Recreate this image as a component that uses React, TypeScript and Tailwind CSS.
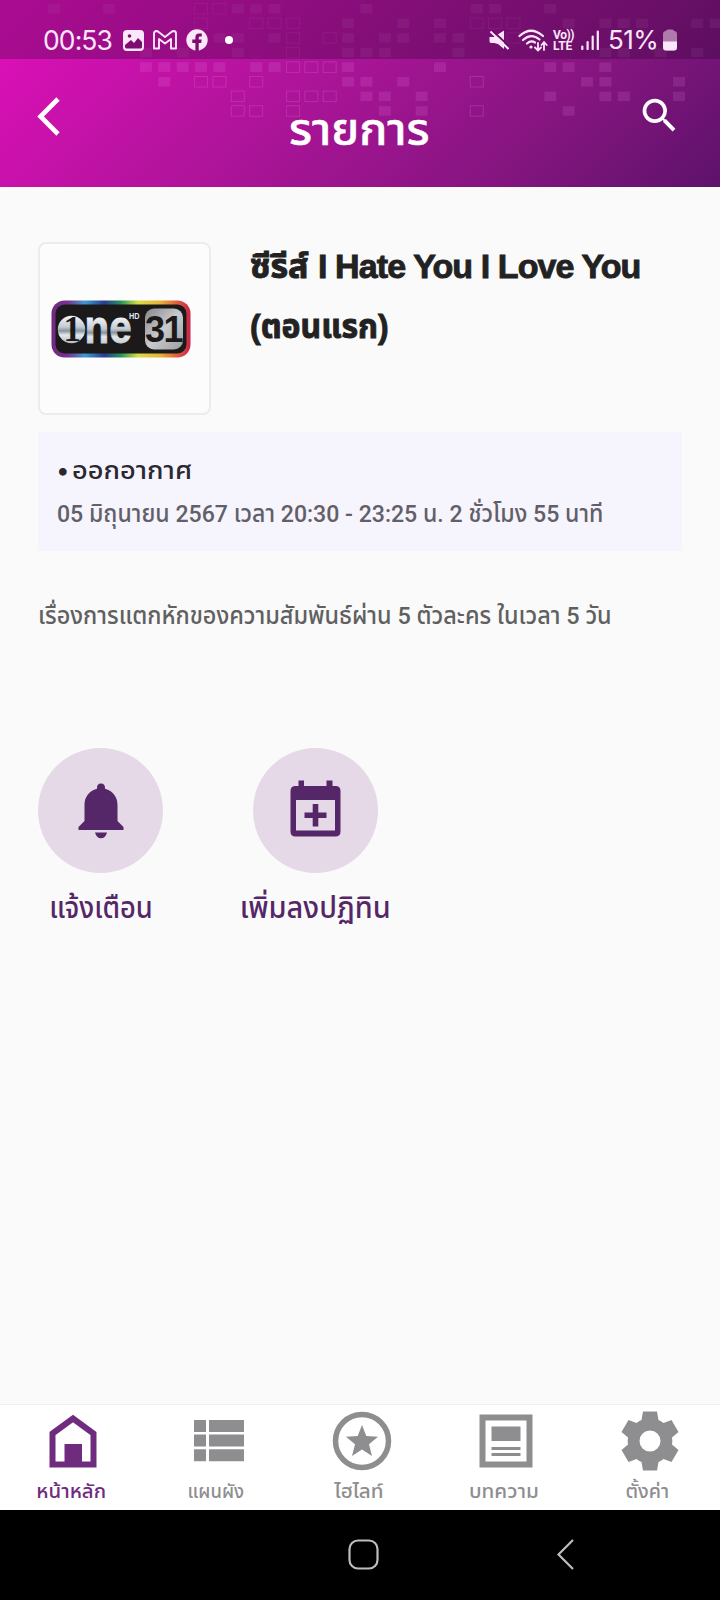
import { MdSearch } from "react-icons/md";

// Mosaic rows behind the header, by column index
const FILLED: number[][] = [
  [0, 3, 10, 11, 12, 17, 23, 24, 27],
  [16, 19, 21, 28, 30, 31, 32, 35, 36],
  [9, 10, 12, 16, 18, 19, 21, 22],
  [5, 7, 10, 16, 17, 18, 22, 30, 31, 33, 35],
  [5, 6, 7, 8, 9, 11, 12, 16, 21, 27, 28, 30],
  [6, 16, 17, 19, 29, 30, 34],
  [17, 18, 20, 27, 30, 31, 34],
  [18, 20, 28],
];

const OUTLINED: number[][] = [
  [8, 9],
  [8, 11, 12, 13, 23, 24, 25],
  [13, 15, 25],
  [13],
  [13, 14, 15],
  [8, 9, 11, 23],
  [10, 13, 14, 15],
  [10, 11, 13, 23],
];

function Mosaic() {
  return (
    <svg
      className="absolute inset-0"
      width="720"
      height="187"
      viewBox="0 0 720 187"
      aria-hidden
    >
      {FILLED.map((cols, row) =>
        cols.map((c) => (
          <rect
            key={`f${row}-${c}`}
            x={48 + c * 18.38}
            y={4 + row * 14.6}
            width="12"
            height="9.5"
            fill="#e58be0"
            opacity={row < 4 ? 0.12 : 0.16}
          />
        ))
      )}
      {OUTLINED.map((cols, row) =>
        cols.map((c) => (
          <rect
            key={`o${row}-${c}`}
            x={47.5 + c * 18.38}
            y={3.5 + row * 14.6}
            width="13"
            height="10.5"
            fill="none"
            stroke="#e58be0"
            opacity={row < 4 ? 0.15 : 0.22}
          />
        ))
      )}
    </svg>
  );
}

function StatusBar() {
  return (
    <div className="relative flex h-[59px] items-start justify-between bg-[#210026]/28 pt-[24px] pr-[43px] pl-[43px] text-[#fbe6fa]">
      <div className="flex h-8 items-center">
        <span className="w-[80px] text-[26.5px] leading-8 tracking-[-0.9px] whitespace-nowrap">
          00:53
        </span>
        {/* Gallery */}
        <svg width="21" height="21" viewBox="0 0 21 21">
          <rect width="21" height="21" rx="4" fill="currentColor" />
          <path
            d="M2 17 L2 15 L8 10 L11 13 L15 8 L19 12 V17 Q19 18.500 17 18.500 H4 Q2 18.500 2 17Z"
            fill="#7e0b70"
          />
          <circle cx="6.500" cy="6" r="1.800" fill="#7e0b70" />
        </svg>
        {/* Gmail */}
        <svg className="ml-[9px]" width="24" height="20" viewBox="0 0 24 20">
          <path
            d="M1 3.500 Q1 1 3.500 1 L5 1.500 L12 7 L19 1.500 L20.500 1 Q23 1 23 3.500 V18.500 H18 V9 L12 13.500 L6 9 V18.500 H1Z"
            fill="none"
            stroke="currentColor"
            strokeWidth="1.900"
            strokeLinejoin="round"
          />
        </svg>
        {/* Facebook */}
        <svg className="ml-[9px]" width="22" height="22" viewBox="0 0 22 22">
          <circle cx="11" cy="11" r="10.700" fill="currentColor" />
          <path
            d="M9.400 22 V14 H6.300 V10.600 H9.400 V8.400 Q9.400 4.600 13 4.600 H15.800 V7.600 H14 Q12.700 7.600 12.700 9 V10.600 H15.700 L15.200 14 H12.700 V22Z"
            fill="#7e0b70"
          />
        </svg>
        <span className="ml-[17px] size-2 rounded-full bg-white" />
      </div>
      <div className="flex h-8 items-center">
        {/* Muted */}
        <svg width="20" height="20" viewBox="0 0 20 20">
          <path
            d="M0.500 7 H5 L15 0.500 V19 L9 14 L5 13 H2 Q0.500 13 0.500 11Z"
            fill="currentColor"
          />
          <path d="M2.500 0 L20 16" stroke="#6d0b68" strokeWidth="2" />
          <path d="M1.500 1.500 L19.500 19" stroke="currentColor" strokeWidth="2" />
        </svg>
        {/* Wi-Fi */}
        <svg className="ml-[9px]" width="30" height="23" viewBox="0 0 30 23">
          <g
            fill="none"
            stroke="currentColor"
            strokeWidth="2.200"
            strokeLinecap="round"
          >
            <path d="M1.500 7 Q13 -3.500 25 7" />
            <path d="M5 11 Q13 3.500 21.500 10.500" />
            <path d="M9 14.500 Q13 11 17 13.500" />
            <path d="M20 14 V21 M17 18.500 L20 21.500 L23 18.500" strokeWidth="1.800" />
            <path d="M26 21 V13.500 M23.500 16 L26 13 L28.700 16" strokeWidth="1.800" />
          </g>
          <circle cx="13" cy="18" r="1.600" fill="currentColor" />
        </svg>
        <div className="mt-px ml-[5px] flex w-[22px] flex-col font-['Roboto',sans-serif] text-[12px] leading-[11px] font-bold whitespace-nowrap">
          <span className="h-[11px] tracking-[-0.4px]">Vo))</span>
          <span className="h-[11px]">LTE</span>
        </div>
        {/* Signal */}
        <svg className="ml-[6px]" width="18" height="20" viewBox="0 0 18 20">
          <path
            d="M1.300 19 V16.500 M6.600 19 V12 M11.700 19 V6.500 M16.800 19 V1.500"
            stroke="currentColor"
            strokeWidth="2.200"
            strokeLinecap="round"
          />
        </svg>
        <span className="ml-[9px] w-[51px] text-[26px] leading-8 tracking-[-0.6px] whitespace-nowrap">
          51%
        </span>
        {/* Battery */}
        <svg className="ml-[4px]" width="14" height="22" viewBox="0 0 14 22">
          <path
            d="M3 2 Q3 0.500 5 0.500 H9 Q11 0.500 11 2 Q14 2 14 5 V18 Q14 21.500 11 21.500 H3 Q0 21.500 0 18 V5 Q0 2 3 2Z"
            fill="currentColor"
            opacity="0.500"
          />
          <path
            d="M0 12.500 H14 V18 Q14 21.500 11 21.500 H3 Q0 21.500 0 18Z"
            fill="currentColor"
          />
        </svg>
      </div>
    </div>
  );
}

function Header() {
  return (
    <header className="relative h-[187px] bg-[linear-gradient(135deg,#e00fbb_0%,#d810b5_8%,#aa1497_45%,#84157f_75%,#5d126b_100%)]">
      <Mosaic />
      <StatusBar />
      <div className="relative grid h-32 grid-cols-[1fr_auto_1fr] items-start pr-[38px] pl-[37px] text-white">
        <svg className="mt-[38px]" width="24" height="39" viewBox="0 0 24 39">
          <path
            d="M21 2 L3.500 19.500 L21 37"
            fill="none"
            stroke="currentColor"
            strokeWidth="4.600"
          />
        </svg>
        <h1 className="mt-[36px] scale-x-[1.03] text-[45px] leading-[68px] font-medium whitespace-nowrap [-webkit-text-stroke:0.5px_white]">
          รายการ
        </h1>
        <MdSearch className="mt-[34px] size-[45px] justify-self-end" />
      </div>
    </header>
  );
}

function ChannelLogo() {
  return (
    <svg width="140" height="58" viewBox="0 0 140 58" role="img" aria-label="one31">
      <defs>
        <linearGradient id="rainbow">
          <stop offset="0" stopColor="#71277f" />
          <stop offset="0.120" stopColor="#76358f" />
          <stop offset="0.240" stopColor="#3e9bd0" />
          <stop offset="0.380" stopColor="#2a3c8f" />
          <stop offset="0.500" stopColor="#26945b" />
          <stop offset="0.620" stopColor="#d9dc45" />
          <stop offset="0.780" stopColor="#e9b23a" />
          <stop offset="0.900" stopColor="#e2603a" />
          <stop offset="1" stopColor="#c8234a" />
        </linearGradient>
        <linearGradient id="chrome" x1="0" y1="0" x2="0" y2="1">
          <stop offset="0" stopColor="#f4f7f9" />
          <stop offset="0.400" stopColor="#c3ccd3" />
          <stop offset="0.550" stopColor="#8795a0" />
          <stop offset="0.700" stopColor="#e3e8eb" />
          <stop offset="1" stopColor="#b4bcc2" />
        </linearGradient>
        <linearGradient
          id="chromeText"
          gradientUnits="userSpaceOnUse"
          x1="0"
          y1="-26"
          x2="0"
          y2="1"
        >
          <stop offset="0" stopColor="#f4f7f9" />
          <stop offset="0.450" stopColor="#c3ccd3" />
          <stop offset="0.600" stopColor="#8795a0" />
          <stop offset="0.750" stopColor="#e3e8eb" />
          <stop offset="1" stopColor="#c4cbd0" />
        </linearGradient>
        <linearGradient id="plate" x1="0" y1="0" x2="1" y2="1">
          <stop offset="0" stopColor="#85878b" />
          <stop offset="0.500" stopColor="#c9cacd" />
          <stop offset="1" stopColor="#9d9ea2" />
        </linearGradient>
      </defs>
      <rect x="0.500" y="0.500" width="139" height="57" rx="13" fill="url(#rainbow)" />
      <rect x="4.500" y="4.500" width="131" height="49" rx="9" fill="#1b1919" />
      <circle cx="20.500" cy="29.500" r="13.700" fill="url(#chrome)" />
      <text
        x="12.500"
        y="41"
        fontFamily="Liberation Serif, serif"
        fontWeight="700"
        fontSize="35"
        fill="#1b1919"
      >
        1
      </text>
      <text
        transform="translate(33.500 42.500) scale(0.860 1)"
        fontFamily="Liberation Sans, sans-serif"
        fontWeight="700"
        fontSize="47"
        stroke="url(#chromeText)"
        strokeWidth="0.800"
        fill="url(#chromeText)"
      >
        ne
        <tspan
          dx="-3"
          dy="-24"
          fontSize="8.500"
          fontWeight="700"
          stroke="none"
          fill="#dfe8ee"
        >
          HD
        </tspan>
      </text>
      <rect x="94" y="8.500" width="38" height="41" rx="9" fill="url(#plate)" />
      <text
        x="94"
        y="42"
        fontFamily="Liberation Sans, sans-serif"
        fontWeight="700"
        fontSize="36"
        letterSpacing="-1.500"
        fill="#1b1919"
      >
        31
      </text>
    </svg>
  );
}

function BellIcon() {
  return (
    <svg width="46" height="56" viewBox="0 0 46 56" fill="#552768">
      <path d="M23 0.500 C26 0.500 27.300 2.500 27 5.800 C35 8 39.500 14 39.500 22 V38 L45.500 44 V47 H0.500 V44 L6.500 38 V22 C6.500 14 11 8 19 5.800 C18.700 2.500 20 0.500 23 0.500Z" />
      <path d="M17 49.500 H29 Q27.500 55.300 23 55.300 Q18.500 55.300 17 49.500Z" />
    </svg>
  );
}

function CalendarIcon() {
  return (
    <svg className="mb-[5px]" width="51" height="57" viewBox="0 0 51 57" fill="#552768">
      <path
        fillRule="evenodd"
        d="M8.500 0.500 H14 V6 H36.500 V0.500 H42.500 V6 H45.500 Q50.500 6 50.500 11 V51.500 Q50.500 56.500 45.500 56.500 H5.500 Q0.500 56.500 0.500 51.500 V11 Q0.500 6 5.500 6 H8.500Z M6 20 V50.500 H45 V20Z"
      />
      <path d="M22.700 24 H28.300 V32.500 H36.500 V38 H28.300 V46.500 H22.700 V38 H14.500 V32.500 H22.700Z" />
    </svg>
  );
}

const NAV_ITEMS = [
  {
    label: "หน้าหลัก",
    offset: "pl-[2px]",
    color: "text-[#6f2c7f]",
    labelClass: "-translate-x-[2px] scale-x-[1.02]",
    icon: (
      <svg width="60" height="60" viewBox="0 0 60 60">
        <path
          d="M9.500 22.500 L30 7.500 L50.500 22.500 V53.500 H9.500Z"
          fill="none"
          stroke="currentColor"
          strokeWidth="6"
        />
        <path d="M21.500 33 H39 V54 H21.500Z" fill="currentColor" />
      </svg>
    ),
  },
  {
    label: "แผนผัง",
    offset: "pl-[6px]",
    color: "text-[#8e8e90]",
    labelClass: "-translate-x-[3px] scale-x-[0.92]",
    icon: (
      <svg width="60" height="60" viewBox="0 0 60 60">
        <path
          d="M5 9 H17 V21 H5Z M20 9 H55 V21 H20Z M5 23.500 H17 V35.500 H5Z M20 23.500 H55 V35.500 H20Z M5 38.200 H17 V50.200 H5Z M20 38.200 H55 V50.200 H20Z"
          fill="currentColor"
        />
      </svg>
    ),
  },
  {
    label: "ไฮไลท์",
    offset: "pl-[3px]",
    color: "text-[#8e8e90]",
    labelClass: "-translate-x-[3px] scale-x-[1.03]",
    icon: (
      <svg width="60" height="60" viewBox="0 0 60 60">
        <circle
          cx="30"
          cy="30"
          r="26.500"
          fill="none"
          stroke="currentColor"
          strokeWidth="5.500"
        />
        <path
          d="M30 14 L34.300 25 L46 25.800 L37 33.300 L40 45 L30 38.500 L20 45 L23 33.300 L14 25.800 L25.700 25Z"
          fill="currentColor"
        />
      </svg>
    ),
  },
  {
    label: "บทความ",
    offset: "pl-[3px]",
    color: "text-[#8e8e90]",
    labelClass: "-translate-x-[2px] scale-x-[1.03]",
    icon: (
      <svg width="60" height="60" viewBox="0 0 60 60">
        <path
          d="M6.500 6.500 H53.500 V53.500 H6.500Z"
          fill="none"
          stroke="currentColor"
          strokeWidth="6"
        />
        <path
          d="M15.500 15.500 H44.500 V30 H15.500Z M15.500 36 H44.500 V39 H15.500Z M15.500 42 H44.500 V45 H15.500Z"
          fill="currentColor"
        />
      </svg>
    ),
  },
  {
    label: "ตั้งค่า",
    offset: "pl-[3px]",
    color: "text-[#8e8e90]",
    labelClass: "-translate-x-[2px] scale-x-[0.98]",
    icon: (
      <svg width="60" height="60" viewBox="0 0 60 60">
        <path
          fillRule="evenodd"
          d="M23 0.500 H37 L38.500 9 Q41 10 43.500 12 L51.500 9 L58.500 21 L52 26.500 Q52.700 30 52 33.500 L58.500 39 L51.500 51 L43.500 48 Q41 50 38.500 51 L37 59.500 H23 L21.500 51 Q19 50 16.500 48 L8.500 51 L1.500 39 L8 33.500 Q7.300 30 8 26.500 L1.500 21 L8.500 9 L16.500 12 Q19 10 21.500 9Z M30 19.500 A10.500 10.500 0 1 0 30 40.500 A10.500 10.500 0 1 0 30 19.500Z"
          fill="currentColor"
        />
      </svg>
    ),
  },
];

function BottomNav() {
  return (
    <nav className="grid h-[106px] grid-cols-5 border-t border-[#f0f0f0] bg-white">
      {NAV_ITEMS.map((item) => (
        <div
          key={item.label}
          className={`flex flex-col items-center pt-[6px] ${item.offset} ${item.color}`}
        >
          {item.icon}
          <span
            className={`mt-[2px] text-[20px] leading-[36px] font-medium whitespace-nowrap ${item.labelClass}`}
          >
            {item.label}
          </span>
        </div>
      ))}
    </nav>
  );
}

export default function App() {
  return (
    <div className="flex h-[1600px] w-[720px] flex-col overflow-hidden bg-[#fafafa] font-['Inter','Noto_Sans_Thai','Noto_Sans',sans-serif]">
      <Header />

      <main className="flex flex-1 flex-col px-[38px] pt-[55px]">
        <div className="flex gap-[39px]">
          <div className="flex size-[173px] shrink-0 items-center justify-center rounded-lg border-2 border-[#ececec] bg-[#fcfcfc] pr-[8px]">
            <ChannelLogo />
          </div>
          <h2 className="-mt-[6px] font-['Liberation_Sans','Noto_Sans_Thai',sans-serif] text-[34px] leading-[60px] font-bold text-[#222] [-webkit-text-stroke:0.9px_#222]">
            <span className="block whitespace-nowrap">
              ซีรีส์ <span className="tracking-[-0.9px]">I Hate You I Love You</span>
            </span>
            <span className="block origin-left scale-x-[0.94] whitespace-nowrap">
              (ตอนแรก)
            </span>
          </h2>
        </div>

        <section className="mt-[17px] h-[119px] w-[644px] bg-[#f6f4fd] px-[19px] pt-[17px] font-['Roboto','Noto_Sans_Thai',sans-serif]">
          <p className="flex items-center gap-[3px] text-[24.5px] leading-[43px] font-medium whitespace-nowrap text-[#2a2830]">
            <span className="font-['Inter',sans-serif] font-bold">•</span>
            <span className="origin-left scale-x-[1.11]">ออกอากาศ</span>
          </p>
          <p className="mt-px origin-left scale-x-[0.962] text-[24px] leading-[43px] font-medium whitespace-nowrap text-[#625f68]">
            05 มิถุนายน 2567 เวลา 20:30 - 23:25 น. 2 ชั่วโมง 55 นาที
          </p>
        </section>

        <p className="mt-[44px] origin-left scale-x-[0.976] font-['Roboto','Noto_Sans_Thai',sans-serif] text-[24px] leading-[43px] font-medium whitespace-nowrap text-[#606060]">
          เรื่องการแตกหักของความสัมพันธ์ผ่าน 5 ตัวละคร ในเวลา 5 วัน
        </p>

        <div className="mt-[110px] flex gap-[90px] text-[30px] leading-[60px] font-medium text-[#552768]">
          <div className="flex w-[125px] flex-col items-center">
            <div className="flex size-[125px] items-center justify-center rounded-full bg-[#e5d9e7]">
              <BellIcon />
            </div>
            <span className="mt-1 scale-x-[0.91] whitespace-nowrap">แจ้งเตือน</span>
          </div>
          <div className="flex w-[125px] flex-col items-center">
            <div className="flex size-[125px] items-center justify-center rounded-full bg-[#e5d9e7]">
              <CalendarIcon />
            </div>
            <span className="mt-1 scale-x-[0.965] whitespace-nowrap">
              เพิ่มลงปฏิทิน
            </span>
          </div>
        </div>
      </main>

      <BottomNav />

      {/* System navigation */}
      <div className="flex h-[90px] items-center bg-black pb-[2px] pl-[348px]">
        <svg width="31" height="31" viewBox="0 0 31 31">
          <rect
            x="1.500"
            y="1.500"
            width="28"
            height="28"
            rx="8.500"
            fill="none"
            stroke="#bdbdbd"
            strokeWidth="2.200"
          />
        </svg>
        <svg className="ml-[177px]" width="19" height="31" viewBox="0 0 19 31">
          <path
            d="M17 1 L2.500 15.500 L17 30"
            fill="none"
            stroke="#bdbdbd"
            strokeWidth="2.200"
          />
        </svg>
      </div>
    </div>
  );
}
